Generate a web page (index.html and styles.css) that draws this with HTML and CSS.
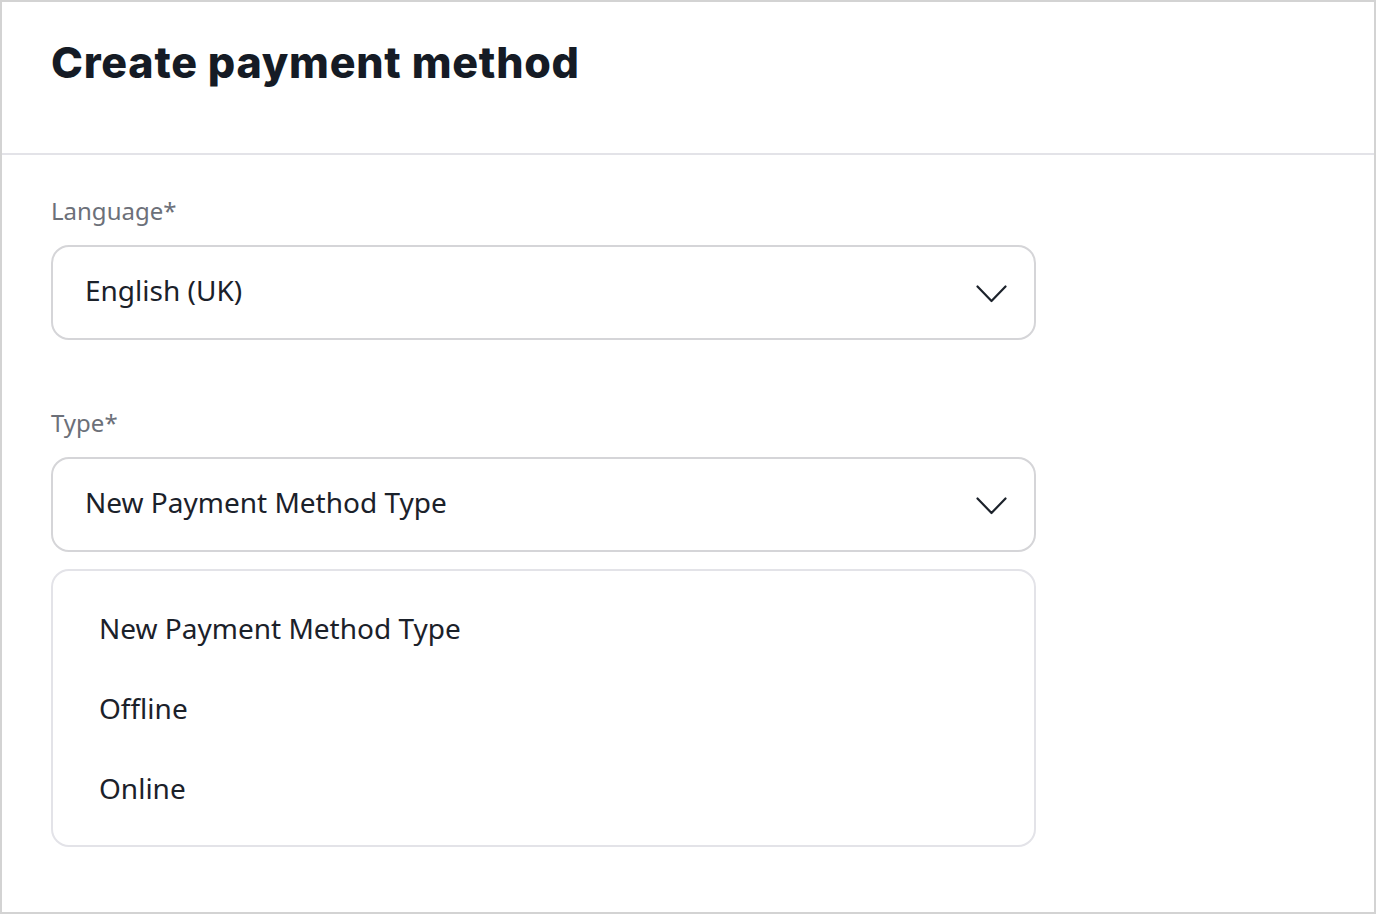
FILE: index.html
```html
<!DOCTYPE html>
<html lang="en">
<head>
<meta charset="utf-8">
<title>Create payment method</title>
<link rel="stylesheet" href="styles.css">
</head>
<body>
<div class="frame">
  <header class="header">
    <h1 class="title">Create payment method</h1>
  </header>
  <main class="content">
    <div class="field">
      <label class="label">Language*</label>
      <div class="select">
        <span class="select-value">English (UK)</span>
        <svg class="chevron" width="31" height="18" viewBox="0 0 31 18"><path d="M1.5 1.5 L15.5 16 L29.5 1.5" fill="none" stroke="#1c222b" stroke-width="2.2" stroke-linecap="round" stroke-linejoin="round"/></svg>
      </div>
    </div>
    <div class="field field-type">
      <label class="label">Type*</label>
      <div class="select">
        <span class="select-value">New Payment Method Type</span>
        <svg class="chevron" width="31" height="18" viewBox="0 0 31 18"><path d="M1.5 1.5 L15.5 16 L29.5 1.5" fill="none" stroke="#1c222b" stroke-width="2.2" stroke-linecap="round" stroke-linejoin="round"/></svg>
      </div>
      <ul class="menu">
        <li class="option">New Payment Method Type</li>
        <li class="option">Offline</li>
        <li class="option">Online</li>
      </ul>
    </div>
  </main>
</div>
</body>
</html>
```

FILE: styles.css
```css
* { box-sizing: border-box; }
html, body { margin: 0; padding: 0; background: #ffffff; }
body { font-family: "Noto Sans", "Open Sans", sans-serif; color: #1b212a; }

.frame {
  width: 1376px;
  height: 914px;
  border: 2px solid #d3d3d3;
  display: flex;
  flex-direction: column;
}

.header {
  height: 153px;
  border-bottom: 2px solid #e3e3e8;
  padding: 34px 49px 0;
}

.title {
  margin: 0;
  font-family: Inter, "Liberation Sans", sans-serif;
  font-weight: 800;
  font-size: 43px;
  line-height: 52px;
  color: #151b25;
  letter-spacing: 0.75px;
}

.content {
  padding: 40px 49px 0;
}

.field { display: flex; flex-direction: column; width: 985px; }
.field-type { margin-top: 67px; }

.label {
  font-size: 24px;
  line-height: 32px;
  color: #6c7079;
  margin-bottom: 18px;
}

.select {
  height: 95px;
  border: 2px solid #d5d5d8;
  border-radius: 18px;
  display: flex;
  align-items: center;
  justify-content: space-between;
  padding: 0 27px 0 32px;
}

.select-value {
  font-size: 28px;
  line-height: 40px;
  margin-top: -6px;
  color: #1b212a;
}

.chevron { display: block; margin-top: 2px; }

.menu {
  list-style: none;
  margin: 17px 0 0;
  padding: 37px 0 21px;
  border: 2px solid #e3e3e8;
  border-radius: 18px;
  height: 278px;
}

.option {
  font-size: 28px;
  line-height: 40px;
  padding: 0 46px;
  margin-bottom: 40px;
  color: #1b212a;
}
.option:last-child { margin-bottom: 0; }
```
